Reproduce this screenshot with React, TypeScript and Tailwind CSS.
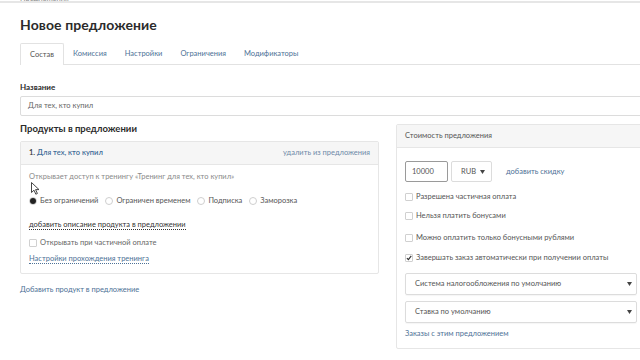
import React from 'react'

const font = { fontFamily: 'Lato, "Open Sans", "Liberation Sans", sans-serif' }

function Caret() {
    return (
        <svg width="5" height="4" viewBox="0 0 5 4" className="shrink-0">
            <path d="M0 0 L5 0 L2.5 4 Z" fill="#444" />
        </svg>
    )
}

function Radio({ checked, label }: { checked?: boolean; label: string }) {
    return (
        <label className="flex items-center gap-[3px]">
            <span className="w-[8px] h-[8px] rounded-full border border-[#cfcfcf] bg-white flex items-center justify-center">
                {checked && <span className="w-[6px] h-[6px] rounded-full bg-[#222]" />}
            </span>
            <span>{label}</span>
        </label>
    )
}

function Check({ checked, label }: { checked?: boolean; label: string }) {
    return (
        <label className="flex items-center gap-[3px]">
            <span className="w-[8px] h-[8px] rounded-[1px] border border-[#d0d0d0] bg-white flex items-center justify-center">
                {checked && (
                    <svg width="8" height="8" viewBox="0 0 8 8">
                        <path d="M1.2 4.2 L3.2 6.2 L7 1.2" stroke="#333" strokeWidth="1.6" fill="none" />
                    </svg>
                )}
            </span>
            <span>{label}</span>
        </label>
    )
}

export default function App() {
    return (
        <div className="w-[640px] h-[360px] overflow-hidden bg-white relative text-[#555]" style={font}>
            {/* верх — хлебные крошки */}
            <div className="border-b-2 border-[#e6e6e6] h-[3px] overflow-hidden">
                <div className="pl-5 text-[7.5px] leading-[8px] -mt-[5px] text-[#8a8a8a]">Предложения</div>
            </div>

            <div className="w-[626px] pl-5">
                <h1 className="mt-[10px] text-[14px] leading-[24px] font-bold text-[#2b2b2b] tracking-[0.1px]">Новое предложение</h1>

                {/* вкладки */}
                <div className="mt-[6px] flex border-b border-[#e2e2e2] h-[22px] text-[7.5px] w-[620px]">
                    <div className="px-[9px] flex items-center border border-b-0 border-[#e2e2e2] rounded-t-[2px] bg-white text-[#555] -mb-px">Состав</div>
                    <div className="px-[9px] flex items-center text-[#4d7196]">Комиссия</div>
                    <div className="px-[9px] flex items-center text-[#4d7196]">Настройки</div>
                    <div className="px-[9px] flex items-center text-[#4d7196]">Ограничения</div>
                    <div className="px-[9px] flex items-center text-[#4d7196]">Модификаторы</div>
                </div>

                {/* название */}
                <div className="mt-[16px] text-[8px] font-bold text-[#2b2b2b] leading-[12px]">Название</div>
                <div className="mt-[3px] h-[20px] border border-[#dcdcdc] rounded-[2px] flex items-center px-[7px] text-[7.5px] text-[#666] w-[626px]">
                    Для тех, кто купил
                </div>

                <div className="flex gap-[17px] mt-[7px]">
                    {/* левая колонка */}
                    <div className="w-[359px] shrink-0">
                        <div className="text-[9.5px] font-bold text-[#2b2b2b] leading-[14px] mt-[-1px]">Продукты в предложении</div>
                        <div className="mt-[5px] border border-[#e6e6e6] rounded-[2px] h-[133px] relative">
                            <div className="h-[23px] bg-[#f6f6f6] border-b border-[#e6e6e6] flex items-center justify-between px-[8px] text-[7.5px]">
                                <span className="font-semibold">
                                    <span className="text-[#333]">1. </span>
                                    <span className="text-[#3f6b97]">Для тех, кто купил</span>
                                </span>
                                <span className="text-[#6e8aa8]">удалить из предложения</span>
                            </div>
                            <div className="px-[8px] text-[7.5px]">
                                <div className="mt-[6px] leading-[12px] text-[#8a8a8a]">Открывает доступ к тренингу «Тренинг для тех, кто купил»</div>
                                <div className="mt-[12px] flex items-center gap-[7px] leading-[12px] text-[#555]">
                                    <Radio checked label="Без ограничений" />
                                    <Radio label="Ограничен временем" />
                                    <Radio label="Подписка" />
                                    <Radio label="Заморозка" />
                                </div>
                                <div className="mt-[12px] leading-[12px]">
                                    <span className="text-[#333] border-b border-dotted border-[#333]">добавить описание продукта в предложении</span>
                                </div>
                                <div className="mt-[6px] leading-[12px] text-[#666]">
                                    <Check label="Открывать при частичной оплате" />
                                </div>
                                <div className="mt-[4px] leading-[12px]">
                                    <span className="text-[#4d7196] border-b border-dotted border-[#4d7196]">Настройки прохождения тренинга</span>
                                </div>
                            </div>
                            {/* курсор */}
                            <svg className="absolute left-[10px] top-[40px]" width="9" height="13" viewBox="0 0 9 13">
                                <path d="M0.5 0.5 L0.5 10.5 L3 8.2 L4.8 12.2 L6.4 11.5 L4.6 7.6 L8 7.6 Z" fill="white" stroke="#333" strokeWidth="0.9" strokeLinejoin="round" />
                            </svg>
                        </div>
                        <div className="mt-[10px] text-[7.5px] text-[#4d7196] leading-[12px]">Добавить продукт в предложение</div>
                    </div>

                    {/* правая колонка */}
                    <div className="w-[250px] shrink-0 border border-[#e6e6e6] rounded-[2px] h-[225px] mt-[1px]">
                        <div className="h-[23px] bg-[#f6f6f6] border-b border-[#e6e6e6] flex items-center px-[8px] text-[7.5px] text-[#555]">
                            Стоимость предложения
                        </div>
                        <div className="px-[8px] text-[7.5px]">
                            <div className="mt-[13px] flex items-center h-[21px]">
                                <div className="w-[43px] h-[21px] border border-[#9a9a9a] rounded-[2px] flex items-center px-[6px] text-[#555]">10000</div>
                                <div className="ml-[3px] w-[41px] h-[21px] border border-[#dcdcdc] rounded-[2px] flex items-center justify-between pl-[9px] pr-[6px] text-[#555]">
                                    <span>RUB</span>
                                    <Caret />
                                </div>
                                <span className="ml-[14px] text-[#4d7196]">добавить скидку</span>
                            </div>
                            <div className="mt-[9px] leading-[12px] text-[#555] flex flex-col gap-[7px]">
                                <Check label="Разрешена частичная оплата" />
                                <Check label="Нельзя платить бонусами" />
                                <div className="mt-[3px]"><Check label="Можно оплатить только бонусными рублями" /></div>
                                <div className="mt-[1px]"><Check checked label="Завершать заказ автоматически при получении оплаты" /></div>
                            </div>
                            <div className="mt-[9px] h-[22px] border border-[#dcdcdc] rounded-[2px] flex items-center justify-between pl-[9px] pr-[4px] text-[#555] shadow-[0_1px_1px_rgba(0,0,0,0.04)]">
                                <span>Система налогообложения по умолчанию</span>
                                <Caret />
                            </div>
                            <div className="mt-[6px] h-[22px] border border-[#dcdcdc] rounded-[2px] flex items-center justify-between pl-[9px] pr-[4px] text-[#555] shadow-[0_1px_1px_rgba(0,0,0,0.04)]">
                                <span>Ставка по умолчанию</span>
                                <Caret />
                            </div>
                            <div className="mt-[5px] leading-[12px] text-[#4d7196]">Заказы с этим предложением</div>
                        </div>
                    </div>
                </div>
            </div>
        </div>
    )
}
